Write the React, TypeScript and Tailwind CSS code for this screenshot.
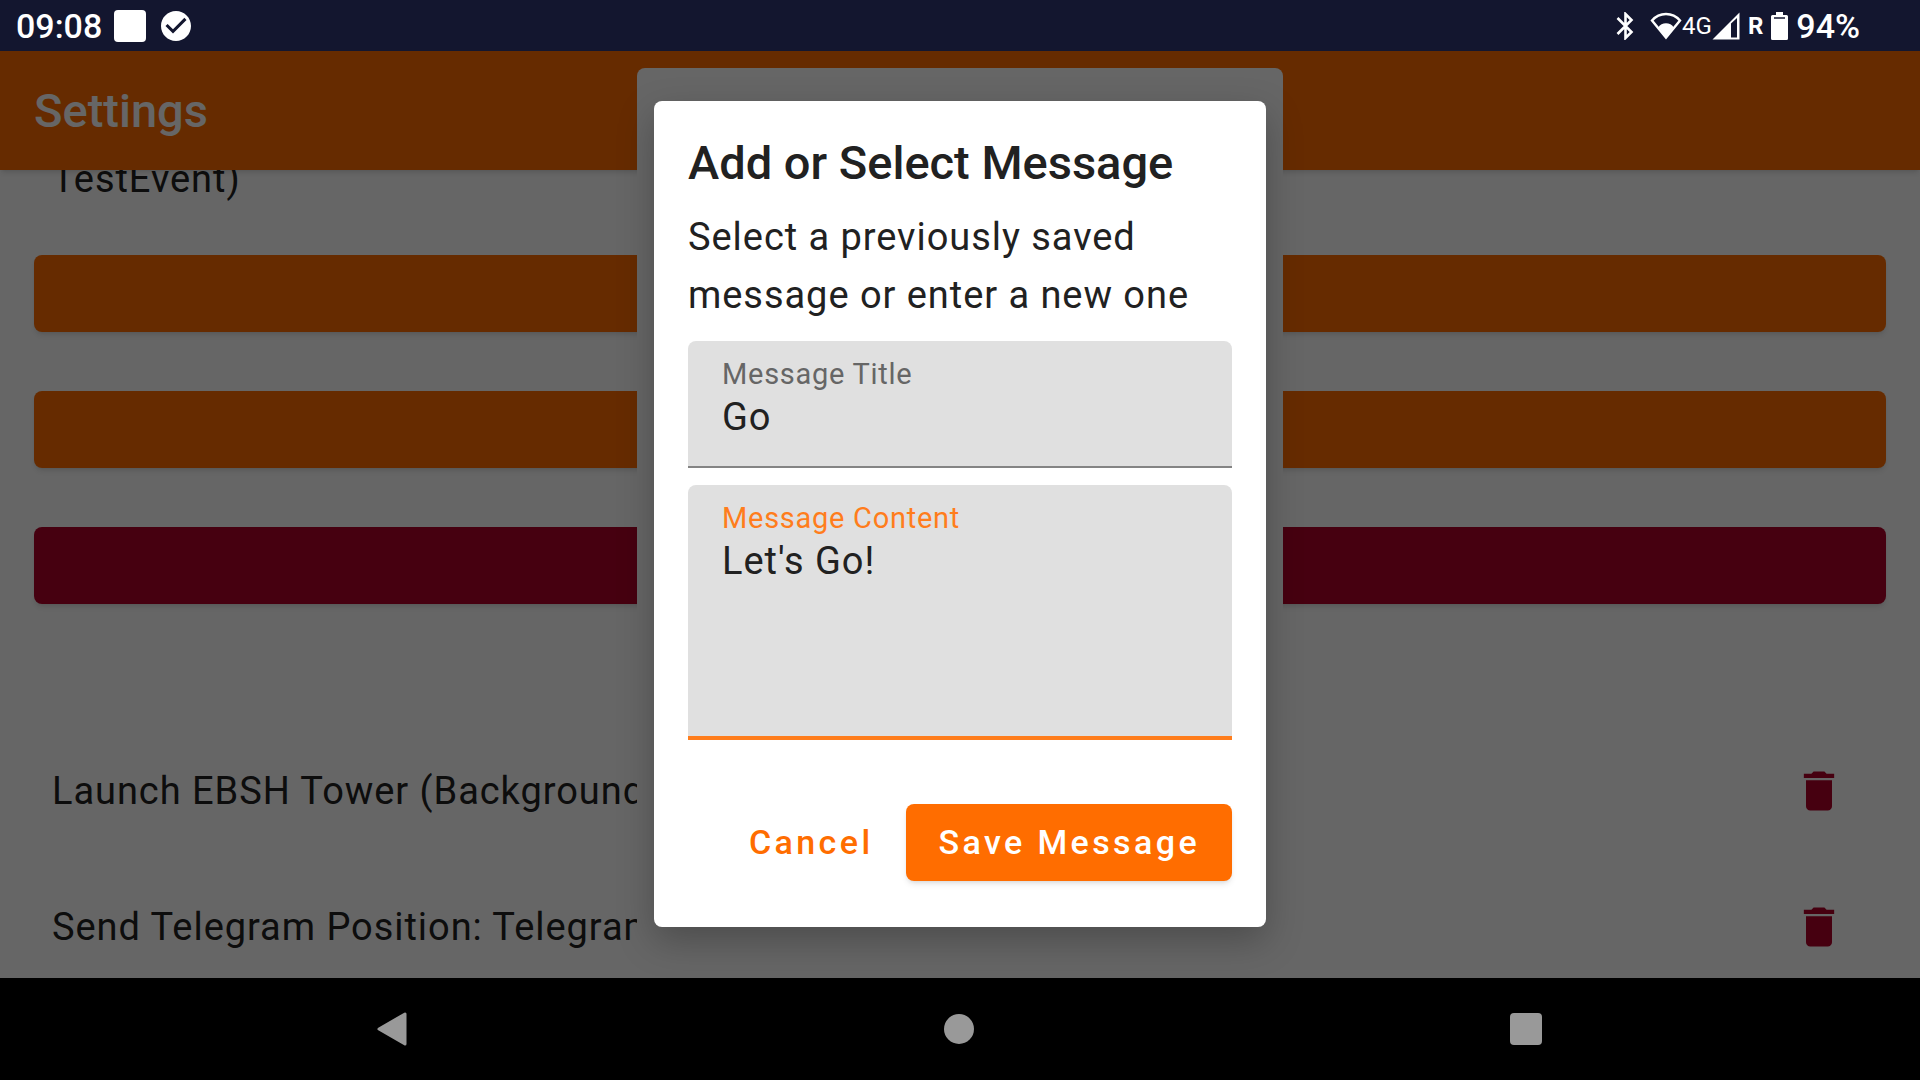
import React, { useState } from "react";

import { MdCheckCircle, MdDelete } from "react-icons/md";

const events = ["Launch EBSH Tower (Background)", "Send Telegram Position: Telegram"];

const BluetoothIcon = () => (
    <svg className="w-[18px] h-7" viewBox="0 0 18 28" fill="none">
        <path d="M1.500 6L15.500 20L9.500 26V2L15.500 8L1.500 22" stroke="white" strokeWidth="2.600" />
    </svg>
);

const WifiIcon = () => (
    <svg className="w-8 h-7" viewBox="0 0 32 28" fill="none">
        <path d="M2 8.5C9.500 -0.200 22.500 -0.200 30 8.500L16 25.500Z" stroke="white" strokeWidth="2.400" />
        <path d="M8.500 15.200C11 9.800 21 9.800 23.500 15.200L16 25Z" fill="white" />
    </svg>
);

const SignalIcon = () => (
    <svg className="w-7 h-7" viewBox="0 0 28 28">
        <path fillRule="evenodd" d="M0.500 27.500L27.500 0.500V27.500ZM19 11.500V25.500H25V6Z" fill="white" />
    </svg>
);

const BatteryIcon = () => (
    <svg className="w-[17px] h-7" viewBox="0 0 17 28">
        <path d="M5 0H12V3H15.500Q17 3 17 4.500V26.500Q17 28 15.500 28H1.500Q0 28 0 26.500V4.500Q0 3 1.500 3H5Z" fill="white" />
        <path d="M3 6H14" stroke="#13162f" strokeWidth="1.500" />
    </svg>
);

const StatusBar = () => (
    <header className="flex items-center justify-between h-[51px] shrink-0 bg-[#13162f] text-white pl-4 pr-[60px]">
        <div className="flex items-center">
            <span className="text-[34px] leading-10 font-medium">09:08</span>
            <span className="ml-3 w-8 h-8 rounded-sm bg-white" />
            <MdCheckCircle className="ml-3 w-9 h-9" />
        </div>
        <div className="flex items-center">
            <span className="mr-4">
                <BluetoothIcon />
            </span>
            <WifiIcon />
            <span className="text-2xl leading-10">4G</span>
            <SignalIcon />
            <span className="ml-2 mr-2 text-2xl leading-10 font-bold">R</span>
            <BatteryIcon />
            <span className="ml-2 text-[34px] leading-10 font-medium">94%</span>
        </div>
    </header>
);

const NavBar = () => (
    <nav className="flex items-center justify-between h-[102px] shrink-0 bg-black pl-[360px] pr-[362px]">
        <button className="w-16 h-16 flex items-center justify-center" aria-label="Back">
            <svg className="w-8 h-9" viewBox="0 0 32 36">
                <path d="M3 18L29 3V33Z" fill="#999999" stroke="#999999" strokeWidth="3" strokeLinejoin="round" />
            </svg>
        </button>
        <button className="w-16 h-16 flex items-center justify-center" aria-label="Home">
            <span className="w-[30px] h-[30px] rounded-full bg-[#999999]" />
        </button>
        <button className="w-16 h-16 flex items-center justify-center" aria-label="Recent apps">
            <span className="w-8 h-8 rounded-sm bg-[#999999]" />
        </button>
    </nav>
);

const SettingsPage = () => (
    <div className="h-full flex flex-col">
        <div className="relative z-10 flex items-center h-[119px] shrink-0 bg-[#ff6d00] px-[34px] shadow-md">
            <h1 className="text-[47px] leading-[58px] font-medium text-white">Settings</h1>
        </div>
        <div className="-mt-5">
            <p className="px-[52px] pb-[17px] text-[38px] leading-[58px] tracking-wide">TestEvent)</p>
            <div className="px-[34px]">
                <div className="h-[136px] flex items-center">
                    <button className="w-full h-[77px] rounded-lg bg-[#ff6d00] shadow-md" aria-label="Add event" />
                </div>
                <div className="h-[136px] flex items-center">
                    <button className="w-full h-[77px] rounded-lg bg-[#ff6d00] shadow-md" aria-label="Add action" />
                </div>
                <div className="h-[136px] flex items-center">
                    <button className="w-full h-[77px] rounded-lg bg-[#b00028] shadow-md" aria-label="Reset" />
                </div>
            </div>
            <ul className="mt-[90px]">
                {events.map((event) => (
                    <li key={event} className="h-[136px] flex items-center justify-between pl-[52px] pr-[75px]">
                        <span className="text-[38px] leading-[58px] tracking-wide">{event}</span>
                        <button aria-label="Delete">
                            <MdDelete className="w-[52px] h-[52px] text-[#b00028]" />
                        </button>
                    </li>
                ))}
            </ul>
        </div>
    </div>
);

const MessageDialog = () => {
    const [title, setTitle] = useState("Go");
    const [content, setContent] = useState("Let's Go!");

    const saveHandler = (e: React.FormEvent) => {
        e.preventDefault();
    };

    return (
        <form
            role="dialog"
            aria-labelledby="dialog-title"
            className="w-[612px] flex flex-col rounded-lg bg-white px-[34px] pt-[33px] pb-[46px] shadow-[0_14px_36px_rgba(0,0,0,0.25)]"
            onSubmit={saveHandler}
        >
            <h2 id="dialog-title" className="text-[47px] leading-[58px] font-medium">
                Add or Select Message
            </h2>
            <p className="mt-4 text-[38px] leading-[58px] tracking-wide">Select a previously saved message or enter a new one</p>
            <div className="mt-[17px] flex flex-col rounded-t-lg bg-[#e0e0e0] border-b-2 border-[#848484] px-[34px] pt-4 pb-[27px]">
                <label htmlFor="title" className="text-[29px] leading-[34px] tracking-wide text-[#666666]">
                    Message Title
                </label>
                <input
                    type="text"
                    id="title"
                    className="mt-1 h-11 text-[38px] leading-11 tracking-wide outline-none"
                    value={title}
                    onChange={(e) => setTitle(e.target.value)}
                />
            </div>
            <div className="mt-[17px] flex flex-col rounded-t-lg bg-[#e0e0e0] border-b-4 border-[#ff7d1c] px-[34px] pt-4 pb-[21px]">
                <label htmlFor="content" className="text-[29px] leading-[34px] tracking-wide text-[#ff7d1c]">
                    Message Content
                </label>
                <textarea
                    id="content"
                    className="mt-1 h-44 text-[38px] leading-11 tracking-wide resize-none outline-none"
                    value={content}
                    onChange={(e) => setContent(e.target.value)}
                />
            </div>
            <div className="mt-16 flex justify-end gap-4">
                <button type="button" className="h-[77px] px-[17px] text-[34px] font-medium tracking-widest text-[#ff6d00]">
                    Cancel
                </button>
                <button
                    type="submit"
                    className="h-[77px] px-8 rounded-lg bg-[#ff6d00] text-[34px] font-medium tracking-widest text-white shadow-md"
                >
                    Save Message
                </button>
            </div>
        </form>
    );
};

const App = () => {
    return (
        <div className="h-screen flex flex-col overflow-hidden font-[Roboto,sans-serif] text-[#212121]">
            <StatusBar />
            <main className="relative flex-1 min-h-0 overflow-hidden bg-white">
                <SettingsPage />
                {/* list dialog that stays open under the message dialog */}
                <div className="absolute inset-0 z-20 flex justify-center py-[17px]">
                    <div className="w-[646px] rounded-lg bg-white" />
                </div>
                <div className="absolute inset-0 z-30 flex items-center justify-center bg-black/60 pb-px">
                    <MessageDialog />
                </div>
            </main>
            <NavBar />
        </div>
    );
};

export default App;
